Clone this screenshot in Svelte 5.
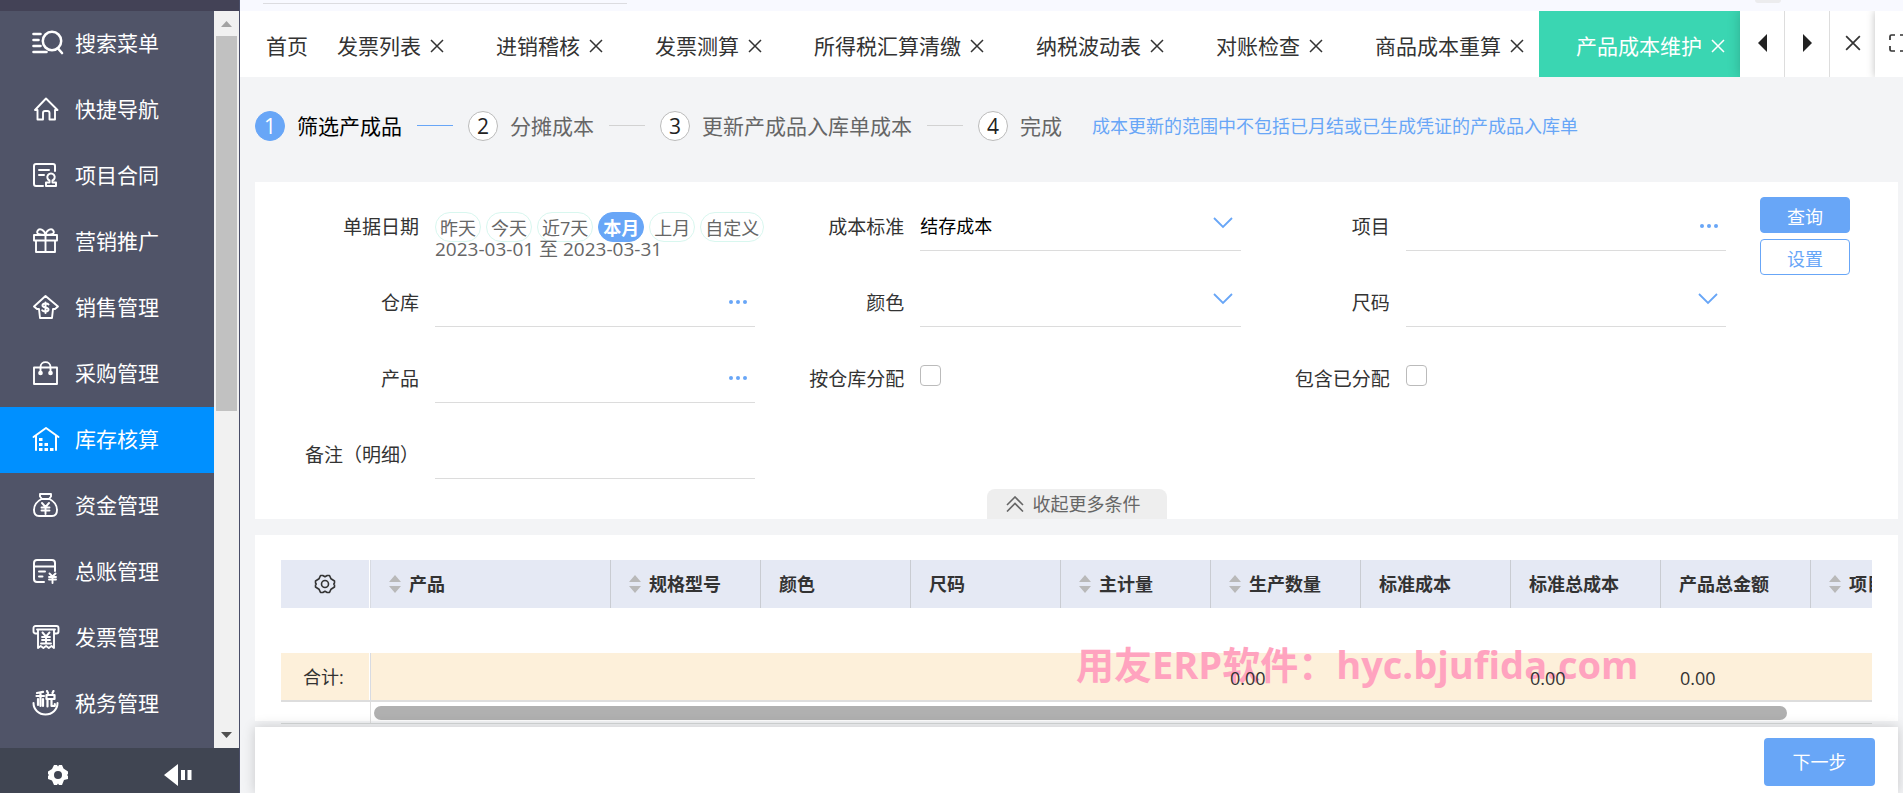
<script>
  const menu = [
    { label: '搜索菜单', icon: 'search' },
    { label: '快捷导航', icon: 'home' },
    { label: '项目合同', icon: 'contract' },
    { label: '营销推广', icon: 'gift' },
    { label: '销售管理', icon: 'sales' },
    { label: '采购管理', icon: 'bag' },
    { label: '库存核算', icon: 'stock', active: true },
    { label: '资金管理', icon: 'money' },
    { label: '总账管理', icon: 'ledger' },
    { label: '发票管理', icon: 'invoice' },
    { label: '税务管理', icon: 'tax' },
  ];
  const tabs = ['发票列表', '进销稽核', '发票测算', '所得税汇算清缴', '纳税波动表', '对账检查', '商品成本重算', '产品成本维护'];
  const steps = ['筛选产成品', '分摊成本', '更新产成品入库单成本', '完成'];
  const ranges = ['昨天', '今天', '近7天', '本月', '上月', '自定义'];
  const fields = [
    { id: 'date', label: '单据日期', kind: 'range' },
    { id: 'standard', label: '成本标准', kind: 'select', value: '结存成本' },
    { id: 'project', label: '项目', kind: 'lookup' },
    { id: 'warehouse', label: '仓库', kind: 'lookup' },
    { id: 'color', label: '颜色', kind: 'select', value: '' },
    { id: 'size', label: '尺码', kind: 'select', value: '' },
    { id: 'product', label: '产品', kind: 'lookup' },
    { id: 'bywh', label: '按仓库分配', kind: 'check' },
    { id: 'allocated', label: '包含已分配', kind: 'check' },
    { id: 'remark', label: '备注（明细）', kind: 'text' },
  ];
  const columns = [
    { name: '产品', sort: true },
    { name: '规格型号', sort: true },
    { name: '颜色' },
    { name: '尺码' },
    { name: '主计量', sort: true },
    { name: '生产数量', sort: true, total: '0.00' },
    { name: '标准成本' },
    { name: '标准总成本', total: '0.00' },
    { name: '产品总金额', total: '0.00' },
    { name: '项目', sort: true },
  ];
  let current = $state('本月');
</script>

{#snippet cross(size)}
  <svg width={size} height={size} viewBox="0 0 14 14" fill="none" stroke="currentColor" stroke-width="1.5"><path d="M1 1l12 12M13 1L1 13" /></svg>
{/snippet}

{#snippet glyph(name)}
  <svg class="glyph" width="32" height="26" viewBox="0 0 32 26" fill="none" stroke="currentColor" stroke-width="1.9" stroke-linejoin="round" stroke-linecap="round">
    {#if name === 'search'}
      <path stroke-width="2.6" d="M1.500 4h7M1.500 10h5M1.500 16h7M1.500 22h13M26 18.500l4 4.500" /><circle cx="20" cy="11" r="9.200" stroke-width="2.500" />
    {:else if name === 'home'}
      <path d="M4.500 14H3l11-11.500L25.500 14H23v9.500h-5.500V17a2 2 0 0 0-2-2h-2.500a2 2 0 0 0-2 2v6.500H5.500V14z" />
    {:else if name === 'contract'}
      <path stroke-width="2" d="M23 9V4a2 2 0 0 0-2-2H4a2 2 0 0 0-2 2v18a2 2 0 0 0 2 2h7M7 8h10M7 13h5M14 24v-3.500h3.500v-2a3.700 3.700 0 1 1 3 0v2H24V24z" />
    {:else if name === 'gift'}
      <path d="M2 7h23v5.500H2zM4 12.500h19V24H4zM13.500 7v17M13.500 7C8 7 4 6 5.500 3s7-2 8 4c1-6 6.500-7 8-4s-2.500 4-8 4" />
    {:else if name === 'sales'}
      <path d="M13.500 2L2 12.500l3 2.500h2l1 9h12l1-9h2l3-2.500z" /><path stroke-width="2" d="M16.500 10.500c-1-1.500-6-1.500-6 1s6 1.500 6 4-5.200 2.500-6.300.8M13.500 8.500v10.500" />
    {:else if name === 'bag'}
      <path d="M2 7.500h23V24H2zM8.500 12.500V7c0-6.500 10-6.500 10 0v5.500" /><circle cx="8.500" cy="13" r="1.400" fill="currentColor" /><circle cx="18.500" cy="13" r="1.400" fill="currentColor" />
    {:else if name === 'stock'}
      <path d="M1.500 11L14 2l12.500 9M4 10v14M24 10v14" stroke-width="2" /><path fill="currentColor" stroke="none" d="M7 12h3.500v3H7zM7 17h3.500v3H7zM12.500 17H16v3h-3.500zM7 22h3.500v3H7zM12.500 22H16v3h-3.500zM18 22h3.500v3H18z" />
    {:else if name === 'money'}
      <path d="M8 2h11v2.500l-2 2.500h-7L8 4.500zM9.500 7C4.500 9.500 2 14 2 18c0 4 1.500 6 5 6h13c3.500 0 5-2 5-6 0-4-2.500-8.500-7.500-11M10 11l3.500 4 3.500-4M9.500 15.500h8M9.500 18.500h8M13.500 15v7" />
    {:else if name === 'ledger'}
      <path stroke-width="2" d="M12 24H5a3 3 0 0 1-3-3V5a3 3 0 0 1 3-3h15a3 3 0 0 1 3 3v8M2 8.500h21M7 13.500h6M7 18.500h3.500" /><path d="M17.500 15.500l3 3 3-3M17 19h7M17 21.500h7M20.500 18.500V25" />
    {:else if name === 'invoice'}
      <path d="M6 9.500H3.500a2 2 0 0 1-2-2V4a2 2 0 0 1 2-2h21a2 2 0 0 1 2 2v3.500a2 2 0 0 1-2 2H22M5 5.500h18M6 6v18l2.700-2 2.700 2 2.700-2 2.700 2 2.700-2L22 24V6M10.500 8.500l3.500 4 3.500-4M10 13h8M10 16h8M14 12.500V19M9 19.500h10" />
    {:else}
      <path stroke-width="2" d="M1.500 13c0 6.500 5.300 11.500 12 11.500s12-5 12-11.500" /><path stroke-width="2.200" d="M5 3l6-1.200M4.500 6h7.500M8.500 2.500V16M6 9v6M11 9v7M15 1l1 2M21.500 1l-1 2M14.500 5h8v4h-8zM15.500 9.500v7M19.500 9.500v6.500h3.300v-2" />
    {/if}
  </svg>
{/snippet}

<div class="app">
  <aside>
    <div class="brand"></div>
    <div class="side-body">
      <nav>
        {#each menu as item}
          <a href="#top" class:active={item.active}>{@render glyph(item.icon)}<span>{item.label}</span></a>
        {/each}
      </nav>
      <div class="vbar">
        <svg width="11" height="6" viewBox="0 0 11 6"><path d="M5.500 0L11 6H0z" fill="#a3a3a3" /></svg>
        <div class="vthumb"></div>
        <svg width="11" height="6" viewBox="0 0 11 6"><path d="M5.500 6L0 0h11z" fill="#505050" /></svg>
      </div>
    </div>
    <div class="side-foot">
      <button aria-label="设置">
        <svg width="22" height="22" viewBox="0 0 22 22"><path fill="#fff" fill-rule="evenodd" d="M7 1h3l1 1.500L12 1h3l1.500 3.500 4.500 3V10l-1 1 1 1v3l-4 1-2 5h-3l-1-1.500L10 21H7l-2-4.500-4-1.500v-3l1-1-1-1V7.500L5 5zM11 7a4 4 0 1 0 0 8 4 4 0 0 0 0-8z" /></svg>
      </button>
      <button aria-label="收起">
        <svg width="28" height="22" viewBox="0 0 28 22" fill="#fff"><path d="M0 11L14 0v22zM17 6h4v10h-4zM23.500 6h4v10h-4z" /></svg>
      </button>
    </div>
  </aside>

  <div class="main">
    <div class="top"><div class="search-line"></div><div class="avatar"></div></div>

    <div class="tabbar">
      <div class="tabs">
        <a class="home" href="#top">首页</a>
        {#each tabs as tab, i}
          <div class="tab" class:active={i === tabs.length - 1}>
            <a href="#top">{tab}</a>
            <button aria-label="关闭">{@render cross(14)}</button>
          </div>
        {/each}
      </div>
      <div class="tools">
        <button aria-label="向左"><svg width="9" height="18" viewBox="0 0 9 18"><path d="M9 0v18L0 9z" fill="#222" /></svg></button>
        <button aria-label="向右"><svg width="9" height="18" viewBox="0 0 9 18"><path d="M0 0v18l9-9z" fill="#222" /></svg></button>
        <button aria-label="全部关闭">{@render cross(16)}</button>
        <button class="full" aria-label="全屏"><svg width="20" height="18" viewBox="0 0 20 18" fill="none" stroke="#333" stroke-width="1.7"><path d="M1 6V2.500a1.500 1.500 0 0 1 1.500-1.500H6M11 1h6.500A1.500 1.500 0 0 1 19 2.500V6M1 12v3.500A1.500 1.500 0 0 0 2.500 17H6M11 17h6.500a1.500 1.500 0 0 0 1.500-1.500V12" /></svg></button>
      </div>
    </div>

    <div class="content">
      <div class="steps">
        {#each steps as step, i}
          {#if i > 0}<div class="dash" class:reached={i === 1}></div>{/if}
          <div class="step" class:on={i === 0}><b>{i + 1}</b><span>{step}</span></div>
        {/each}
        <p>成本更新的范围中不包括已月结或已生成凭证的产成品入库单</p>
      </div>

      <form class="card filter" onsubmit={(e) => e.preventDefault()}>
        <div class="filter-row">
          <div class="grid">
            {#each fields as f}
              <div class="field">
                {#if f.kind === 'range'}
                  <span class="label">{f.label}</span>
                  <div class="range">
                    <div class="chips">
                      {#each ranges as r}
                        <button type="button" class:on={r === current} onclick={() => (current = r)}>{r}</button>
                      {/each}
                    </div>
                    <div class="dates">2023-03-01 至 2023-03-31</div>
                  </div>
                {:else}
                  <label class="label" for={f.id}>{f.label}</label>
                  {#if f.kind === 'check'}
                    <input class="check" id={f.id} type="checkbox" />
                  {:else}
                    <div class="control">
                      {#if f.kind === 'select'}
                        <select id={f.id}><option>{f.value}</option></select>
                        <svg width="20" height="12" viewBox="0 0 20 12" fill="none" stroke="#68a6f7" stroke-width="1.8"><path d="M1 1l9 9 9-9" /></svg>
                      {:else}
                        <input id={f.id} type="text" />
                        {#if f.kind === 'lookup'}
                          <button type="button" aria-label="选择"><svg width="18" height="4" viewBox="0 0 18 4" fill="#68a6f7"><circle cx="2" cy="2" r="2" /><circle cx="9" cy="2" r="2" /><circle cx="16" cy="2" r="2" /></svg></button>
                        {/if}
                      {/if}
                    </div>
                  {/if}
                {/if}
              </div>
            {/each}
          </div>
          <div class="actions">
            <button class="primary">查询</button>
            <button class="ghost" type="button">设置</button>
          </div>
        </div>
        <button class="fold" type="button">
          <svg width="18" height="16" viewBox="0 0 18 16" fill="none" stroke="#666" stroke-width="1.6"><path d="M1 9l8-8 8 8M1 15.500l8-8 8 8" /></svg>
          收起更多条件
        </button>
      </form>

      <div class="card list">
        <div class="table-wrap">
          <table>
            <colgroup><col class="c-set" /><col class="c-wide" />{#each columns.slice(1) as _}<col class="c-std" />{/each}</colgroup>
            <thead>
              <tr>
                <th class="set">
                  <svg width="22" height="20" viewBox="0 0 22 20" fill="none" stroke="#333" stroke-width="1.600" stroke-linejoin="round"><path d="M6.500 1.500h2.300L11 2.800l2.200-1.300h2.300L17 4.800l3.500 2.200v2L19.800 10l.7 1v2L17 15.200l-1.500 3.300h-2.300L11 17.200l-2.200 1.300H6.500L5 15.200 1.500 13v-2l.7-1-.7-1V7L5 4.800z" /><circle cx="11" cy="10" r="3.500" /></svg>
                </th>
                {#each columns as c}
                  <th>
                    <div class="head">
                      {#if c.sort}<svg width="12" height="18" viewBox="0 0 12 18" fill="#b9b9b9"><path d="M6 0l6 7H0zM6 18l6-7H0z" /></svg>{/if}
                      {c.name}
                    </div>
                  </th>
                {/each}
              </tr>
            </thead>
            <tbody><tr class="blank"><td colspan="11"></td></tr></tbody>
            <tfoot>
              <tr>
                <td class="set">合计:</td>
                {#each columns as c}<td><span>{c.total ?? ''}</span></td>{/each}
              </tr>
            </tfoot>
          </table>
          <div class="hbar"><div class="pin"></div><div class="track"><div class="hthumb"></div></div></div>
          <div class="mark">用友ERP软件：hyc.bjufida.com</div>
        </div>
      </div>
    </div>

    <footer><button class="primary">下一步</button></footer>
  </div>
</div>

<style>
  :global(body) { margin: 0; }
  .app, .app * { box-sizing: border-box; }
  .app {
    display: flex;
    height: 100vh;
    overflow: hidden;
    background: #f3f4f6;
    color: #333;
    font: 18px/24px "Open Sans", "Noto Sans CJK SC", sans-serif;
  }
  button, input, select { font: inherit; color: inherit; border: 0; background: none; padding: 0; margin: 0; }
  button { cursor: pointer; }
  a { color: inherit; text-decoration: none; }
  svg { display: block; flex: none; }

  aside { width: 240px; flex: none; display: flex; flex-direction: column; background: #505468; border-right: 1px solid #4a4e68; color: #fff; }
  .brand { height: 11px; flex: none; background: #434256; }
  .side-body { flex: 1; min-height: 0; display: flex; }
  nav { flex: 1; overflow: hidden; }
  nav a { display: flex; align-items: center; gap: 11px; height: 66px; padding: 0 0 2px 32px; font-size: 21px; }
  nav a.active { background: #0090ff; }
  .vbar { width: 25px; display: flex; flex-direction: column; align-items: center; justify-content: space-between; padding: 10px 2px; background: #f1f1f1; }
  .vthumb { width: 21px; height: 375px; margin: 9px 0 auto; background: #c1c1c1; }
  .side-foot { height: 45px; flex: none; display: flex; justify-content: space-around; align-items: center; background: #404552; padding: 8px 0 0 0; }

  .main { flex: 1; min-width: 0; display: flex; flex-direction: column; }
  .top { height: 11px; flex: none; display: flex; justify-content: space-between; align-items: flex-start; padding: 0 122px 0 23px; background: #f8f9ff; }
  .search-line { width: 364px; height: 4px; border-bottom: 1px solid #dcdce0; }
  .avatar { width: 26px; height: 3px; border-radius: 0 0 13px 13px; background: #ececee; }

  .tabbar { height: 66px; flex: none; display: flex; justify-content: space-between; background: #fff; }
  .tabs { display: flex; padding-left: 26px; font-size: 21px; white-space: nowrap; }
  .home { display: flex; align-items: center; margin-right: -8px; }
  .tab { display: flex; align-items: center; gap: 9px; padding: 0 15px 0 37px; }
  .tab, .home { padding-top: 3px; }
  .tab button { padding-top: 1px; }
  .tab.active { background: #3ad6b2; color: #fff; }
  .tools { display: flex; box-shadow: 0 0 12px rgba(0, 0, 0, 0.2); clip-path: inset(0 0 0 -16px); background: #fff; }
  .tools button { width: 45px; display: flex; align-items: center; justify-content: center; border-right: 1px solid #ddd; padding-bottom: 2px; }
  .tools button:nth-child(3) { border: 0; }
  .tools .full { width: 28px; justify-content: flex-start; padding-left: 14px; border: 0; overflow: hidden; box-shadow: 0 0 8px rgba(0, 0, 0, 0.25); }

  .content { flex: 1; min-height: 0; display: flex; flex-direction: column; padding: 0 5px 6px 15px; }
  .steps { display: flex; align-items: center; height: 105px; padding-bottom: 8px; font-size: 21px; white-space: nowrap; color: #666; flex: none; }
  .step { display: flex; align-items: center; gap: 12px; }
  .step b { width: 30px; height: 30px; border-radius: 50%; border: 1px solid #bbb; background: #fff; color: #222; font-weight: 400; line-height: 28px; text-align: center; }
  .step.on { color: #000; }
  .step.on b { background: #68a6f7; border-color: #68a6f7; color: #fff; }
  .dash { width: 36px; margin: 0 15px; border-top: 1px solid #d2d2d2; }
  .dash.reached { border-color: #68a6f7; }
  .steps p { margin: 0 0 0 30px; font-size: 18px; color: #68a6f7; }

  .card { background: #fff; }
  .filter { flex: none; display: flex; flex-direction: column; align-items: center; margin-bottom: 16px; }
  .filter-row { width: 100%; display: flex; padding: 0 48px 0 15px; gap: 34px; }
  .grid { flex: 1; display: grid; grid-template-columns: repeat(3, 1fr); grid-auto-rows: 40px; row-gap: 36px; padding-top: 29px; }
  .field { display: flex; gap: 16px; min-width: 0; }
  .label { width: 149px; flex: none; text-align: right; font-size: 19px; line-height: 32px; white-space: nowrap; }
  .control { flex: 1; min-width: 0; display: flex; align-items: center; border-bottom: 1px solid #dcdcdc; padding-bottom: 10px; }
  .control input, .control select { flex: 1; min-width: 0; height: 29px; color: #000; appearance: none; outline: 0; }
  .control button { padding: 10px 8px; }
  .control > svg { margin: 0 8px 5px 0; }
  .check { appearance: none; width: 21px; height: 21px; margin-top: 2px; border: 1px solid #bbb; border-radius: 4px; background: #fff; }
  .range { color: #666; white-space: nowrap; }
  .chips { display: flex; gap: 5px; height: 26px; padding-top: 1px; }
  .chips button { height: 30px; padding: 2px 4px 0; border: 1px solid #d8f7ef; border-radius: 15px; flex: none; }
  .chips button.on { background: #68a6f7; border-color: #68a6f7; color: #fff; font-weight: 700; }
  .dates { font-size: 19px; }
  .actions { width: 90px; flex: none; display: flex; flex-direction: column; gap: 6px; padding-top: 15px; }
  .actions button { height: 36px; border-radius: 4px; border: 1px solid #68a6f7; padding-top: 3px; }
  .primary { background: #68a6f7; color: #fff; }
  .ghost { background: #fff; color: #68a6f7; }
  .fold { height: 30px; margin-top: 10px; padding: 0 26px 0 19px; display: flex; align-items: center; gap: 9px; border-radius: 8px 8px 0 0; background: #eee; color: #666; }

  .list { flex: 1; min-height: 0; padding: 25px 26px 0; }
  .table-wrap { position: relative; overflow: hidden; }
  table { width: 1680px; table-layout: fixed; border-collapse: separate; border-spacing: 0; }
  .c-set { width: 90px; }
  .c-wide { width: 240px; }
  .c-std { width: 150px; }
  th { height: 48px; padding: 0 0 0 18px; text-align: left; background: #e5e9f4; border-right: 1px solid #c9ccd2; }
  th.set { padding: 0 0 0 33px; }
  .set { border-right: 1px solid #d8dbe2; box-shadow: inset -1px 0 0 #fff; }
  .head { display: flex; align-items: center; gap: 8px; white-space: nowrap; }
  .blank td { height: 45px; padding: 0; }
  tfoot td { height: 49px; padding: 2px 0 0 19px; background: #fdf0da; border-bottom: 2px solid #ddd; }
  tfoot td.set { padding: 0 0 0 22px; }
  tfoot span { position: relative; z-index: 2; }
  .hbar { display: flex; height: 22px; border-bottom: 1px solid #d5d8d8; }
  .pin { width: 90px; flex: none; border-right: 1px solid #ddd; }
  .track { flex: 1; padding: 4px 3px; }
  .hthumb { width: 94.5%; height: 14px; border-radius: 7px; background: #b0b0b0; }
  .mark { position: absolute; z-index: 1; left: 795px; top: 80px; font-size: 38px; line-height: 48px; font-weight: 700; color: #ffa3bf; white-space: nowrap; pointer-events: none; }

  footer { height: 66px; flex: none; display: flex; justify-content: flex-end; align-items: flex-start; margin: 0 5px 0 15px; padding: 11px 23px 0; background: #fff; box-shadow: 0 0 12px rgba(0, 0, 0, 0.18); position: relative; z-index: 3; }
  footer button { width: 111px; height: 48px; border-radius: 4px; }
</style>
